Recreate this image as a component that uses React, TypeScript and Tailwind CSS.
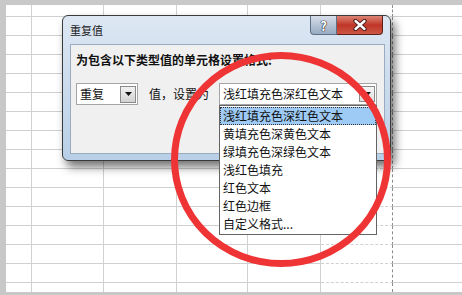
import React from "react";

const cols = [26, 72, 73, 71, 73, 72, 69];
const rows = [12, ...Array(14).fill(19), 9];

const items = [
  "浅红填充色深红色文本",
  "黄填充色深黄色文本",
  "绿填充色深绿色文本",
  "浅红色填充",
  "红色文本",
  "红色边框",
  "自定义格式...",
];

function Sheet() {
  return (
    <div className="flex flex-col bg-white">
      {rows.map((h, r) => (
        <div key={r} className="flex" style={{ height: h }}>
          {cols.map((w, c) => (
            <div
              key={c}
              style={{ width: w }}
              className={`h-full ${r < rows.length - 1 ? "border-b border-b-[#d0d0d0]" : ""} ${
                c === 5
                  ? "border-r border-dashed border-r-[#8c8c8c]"
                  : c < 6
                  ? "border-r border-r-[#d0d0d0]"
                  : ""
              }`}
            />
          ))}
        </div>
      ))}
    </div>
  );
}

function Arrow() {
  return (
    <svg width="7" height="4" viewBox="0 0 7 4">
      <path d="M0 0 L7 0 L3.5 4 Z" fill="#111" />
    </svg>
  );
}

function Dialog() {
  return (
    <div className="absolute left-[62px] top-[15px] w-[329px] h-[146px] rounded-[6px] border border-[#3a3a3a] bg-gradient-to-b from-[#dde7f3] to-[#b8cfe7] shadow-[4px_6px_10px_rgba(0,0,0,0.55)] flex flex-col">
      <div className="h-[28px] flex items-start justify-between">
        <span className="pl-[7px] pt-[7px] text-[11px] leading-[14px] text-[#1a1a1a]">重复值</span>
        <div className="flex mr-[7px]">
          <div className="w-[27px] h-[19px] rounded-bl-[4px] border border-t-0 border-[#5d6f85] bg-gradient-to-b from-[#d6dee8] to-[#98abc2] flex items-center justify-center">
            <span className="text-[13px] leading-none font-bold text-white [text-shadow:0_0_1px_#222,0_0_1px_#222,0_0_1px_#222]">?</span>
          </div>
          <div className="w-[46px] h-[19px] rounded-br-[4px] border border-t-0 border-l-0 border-[#5e2019] bg-gradient-to-b from-[#dc8374] via-[#bf3426] to-[#cc5645] flex items-center justify-center">
            <svg width="14" height="12" viewBox="0 0 14 12">
              <path d="M2.5 2 L11.5 10 M11.5 2 L2.5 10" stroke="#3b1410" strokeWidth="4.2" strokeLinecap="round" />
              <path d="M2.5 2 L11.5 10 M11.5 2 L2.5 10" stroke="#fff" strokeWidth="2.4" strokeLinecap="round" />
            </svg>
          </div>
        </div>
      </div>
      <div className="ml-[7px] mr-[5px] h-[110px] border border-[#9aabbf] bg-[#f0f0f0] px-[5px] pt-[7px]">
        <div className="text-[12px] leading-[16px] font-bold text-[#111]">为包含以下类型值的单元格设置格式:</div>
        <div className="mt-[15px] flex items-center">
          <div className="w-[62px] h-[22px] border border-[#a5a5a5] bg-white flex items-center justify-between pl-[3px] pr-[1px]">
            <span className="text-[12px] leading-none text-[#111]">重复</span>
            <div className="w-[16px] h-[17px] border border-[#8a8a8a] bg-gradient-to-b from-[#f2f2f2] to-[#d2d2d2] flex items-center justify-center">
              <Arrow />
            </div>
          </div>
          <span className="ml-[11px] text-[12px] leading-none text-[#111]">值，设置为</span>
          <div className="relative ml-[10px] w-[158px] h-[22px] border border-[#a5a5a5] bg-white flex items-center justify-between pl-[3px] pr-[1px]">
            <span className="text-[12px] leading-none text-[#111]">浅红填充色深红色文本</span>
            <div className="w-[16px] h-[16px] border border-[#8a8a8a] bg-gradient-to-b from-[#f6f6f6] to-[#e0e0e0] flex items-center justify-center">
              <Arrow />
            </div>
            <div className="absolute left-[-1px] top-[21px] w-[158px] border border-[#646464] bg-white py-[1px] z-10 flex flex-col">
              {items.map((t, i) => (
                <div
                  key={t}
                  className={`h-[18px] flex items-center pl-[2px] text-[12px] leading-none text-[#111] ${
                    i === 0 ? "bg-[#9ecbf5] border border-dotted border-[#333]" : "border border-transparent"
                  }`}
                >
                  {t}
                </div>
              ))}
            </div>
          </div>
        </div>
      </div>
    </div>
  );
}

export default function App() {
  return (
    <div
      className="relative w-[462px] h-[295px] overflow-hidden bg-[#c8c8c8] pl-[6px] pt-[5px]"
      style={{ fontFamily: '"Noto Sans CJK SC", "Noto Sans", sans-serif' }}
    >
      <Sheet />
      <Dialog />
      <svg className="absolute left-0 top-0 z-20 pointer-events-none" width="462" height="295">
        <ellipse cx="281" cy="159.5" rx="106.5" ry="104" fill="none" stroke="#ee3434" strokeWidth="7" />
      </svg>
    </div>
  );
}
